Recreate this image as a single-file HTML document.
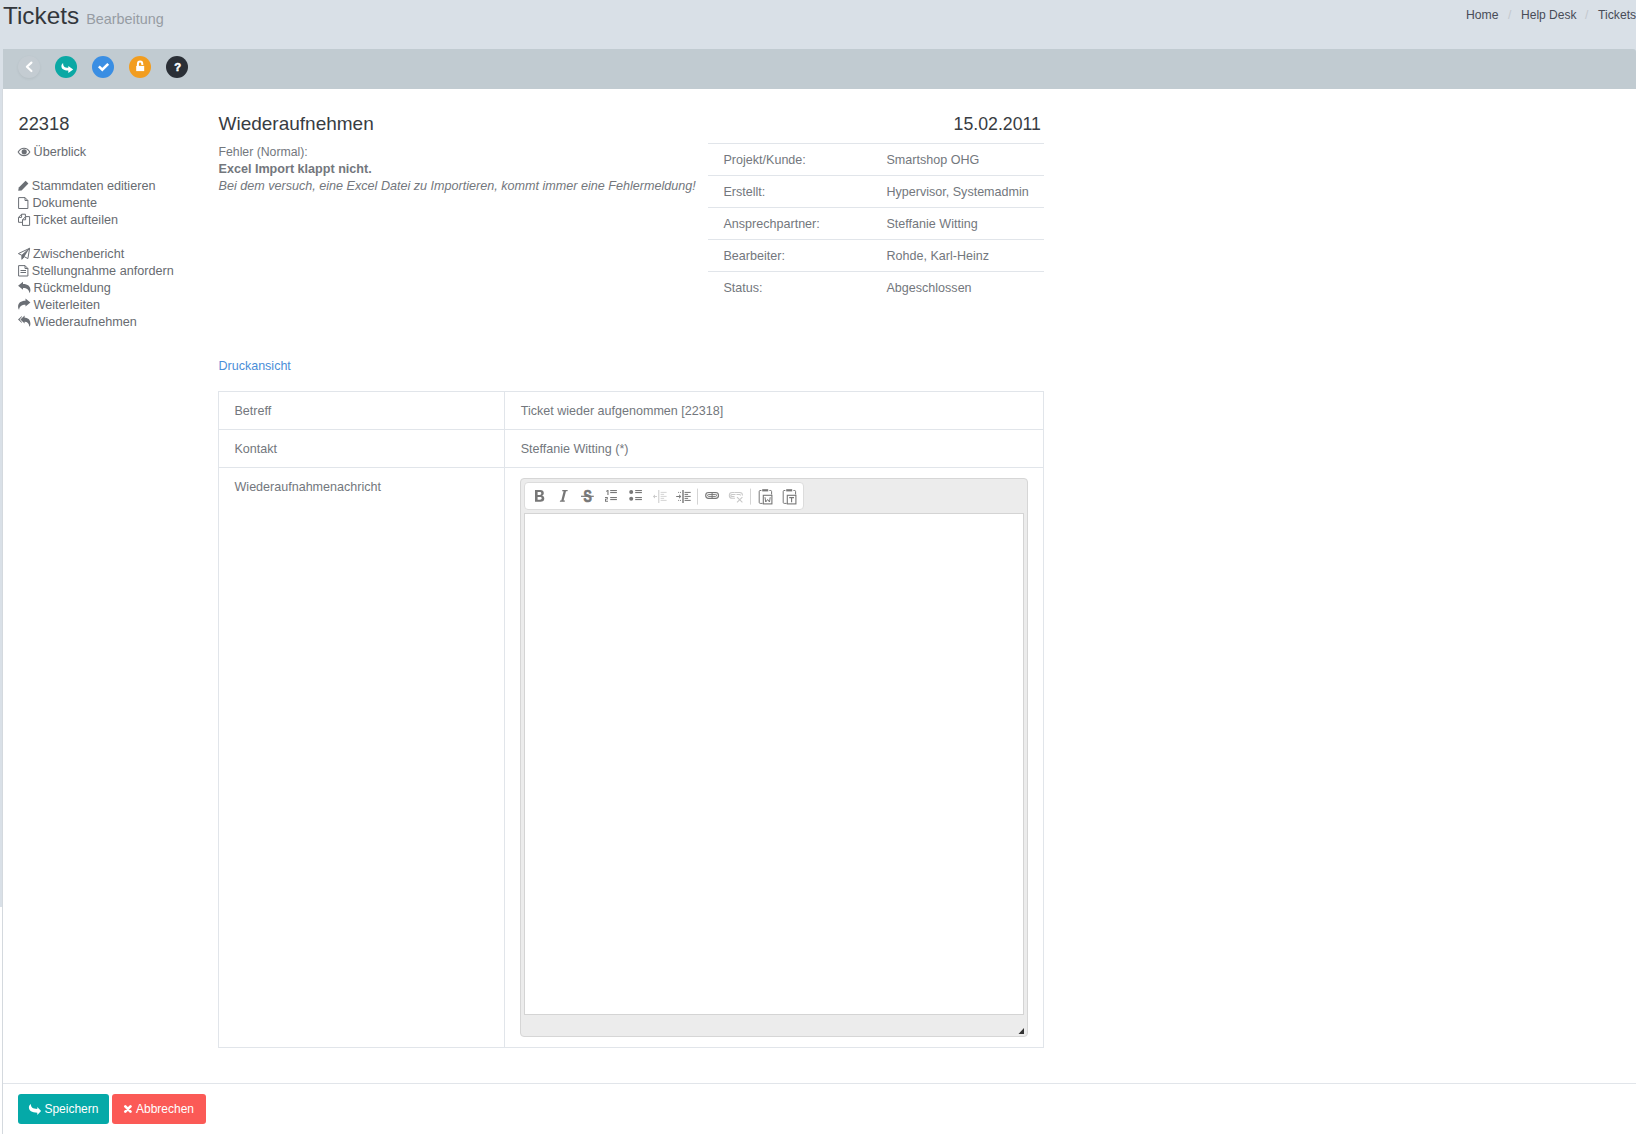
<!DOCTYPE html>
<html><head><meta charset="utf-8">
<style>
html,body{margin:0;padding:0;}
body{width:1636px;height:1134px;overflow:hidden;position:relative;background:#fff;font-family:"Liberation Sans",sans-serif;}
.a{position:absolute;}
.t{position:absolute;white-space:nowrap;line-height:1;}
#hdr{left:0;top:0;width:1636px;height:907px;background:#d9e0e7;}
#tb{left:3px;top:49px;width:1633px;height:40px;background:#c1cbd1;border-top-right-radius:3px;}
#panel{left:3px;top:89px;width:1633px;height:1045px;background:#fff;}
#lline{left:2px;top:89px;width:1px;height:1045px;background:#d4d9de;}
.circ{position:absolute;width:22px;height:22px;border-radius:50%;top:56px;}
.side{color:#676b71;font-size:12.65px;}
.ic{position:absolute;}
.lbl{color:#73777d;font-size:12.55px;}
.hr{position:absolute;height:1px;background:#e1e5ea;}
</style></head><body>
<div id="hdr" class="a"></div>
<div id="tb" class="a"></div>
<div id="panel" class="a"></div>
<div id="lline" class="a"></div>

<!-- header -->
<div class="t" style="left:3px;top:3.7px;font-size:24.3px;color:#33373c;">Tickets</div>
<div class="t" style="left:86.2px;top:11.8px;font-size:14.4px;color:#969ca3;">Bearbeitung</div>
<div class="t" style="left:1466px;top:8.5px;font-size:12.2px;color:#484c57;">Home</div>
<div class="t" style="left:1508px;top:8.5px;font-size:12.2px;color:#c3c8ce;">/</div>
<div class="t" style="left:1521px;top:8.5px;font-size:12.05px;color:#484c57;">Help Desk</div>
<div class="t" style="left:1585px;top:8.5px;font-size:12.2px;color:#c3c8ce;">/</div>
<div class="t" style="left:1598px;top:8.5px;font-size:12.2px;color:#484c57;">Tickets</div>

<!-- toolbar circles -->
<div class="circ" style="left:18px;background:#c4ccd2;box-shadow:0 1px 3px rgba(0,0,0,0.07);"></div>
<div class="circ" style="left:55px;background:#0ba8a4;"></div>
<div class="circ" style="left:92px;background:#3a8ee3;"></div>
<div class="circ" style="left:129px;background:#f29d1f;"></div>
<div class="circ" style="left:166px;background:#2a2f36;"></div>

<!-- sidebar -->
<div class="t" style="left:18.5px;top:114.8px;font-size:18.3px;color:#383c42;">22318</div>
<div class="t side" style="left:33.5px;top:146px;">Überblick</div>
<div class="t side" style="left:31.8px;top:180px;">Stammdaten editieren</div>
<div class="t side" style="left:32.4px;top:197px;">Dokumente</div>
<div class="t side" style="left:33.5px;top:214px;">Ticket aufteilen</div>
<div class="t side" style="left:32.9px;top:248px;">Zwischenbericht</div>
<div class="t side" style="left:31.8px;top:265px;">Stellungnahme anfordern</div>
<div class="t side" style="left:33.5px;top:282px;">Rückmeldung</div>
<div class="t side" style="left:33.5px;top:299px;">Weiterleiten</div>
<div class="t side" style="left:33.5px;top:316px;">Wiederaufnehmen</div>

<!-- main -->
<div class="t" style="left:218.5px;top:113.9px;font-size:19px;color:#383c42;">Wiederaufnehmen</div>
<div class="t lbl" style="left:218.5px;top:146.4px;font-size:12.28px;">Fehler (Normal):</div>
<div class="t lbl" style="left:218.5px;top:163px;font-size:12.6px;font-weight:bold;">Excel Import klappt nicht.</div>
<div class="t lbl" style="left:218.5px;top:180px;font-size:12.6px;font-style:italic;">Bei dem versuch, eine Excel Datei zu Importieren, kommt immer eine Fehlermeldung!</div>

<div class="t" style="left:953.6px;top:115.7px;font-size:17.73px;color:#383c42;">15.02.2011</div>

<div class="hr" style="left:708px;top:143px;width:336px;"></div>
<div class="hr" style="left:708px;top:175px;width:336px;"></div>
<div class="hr" style="left:708px;top:207px;width:336px;"></div>
<div class="hr" style="left:708px;top:239px;width:336px;"></div>
<div class="hr" style="left:708px;top:271px;width:336px;"></div>

<div class="t lbl" style="left:723.5px;top:154.3px;">Projekt/Kunde:</div>
<div class="t lbl" style="left:723.5px;top:186.3px;">Erstellt:</div>
<div class="t lbl" style="left:723.5px;top:218.3px;">Ansprechpartner:</div>
<div class="t lbl" style="left:723.5px;top:250.3px;">Bearbeiter:</div>
<div class="t lbl" style="left:723.5px;top:282.3px;">Status:</div>
<div class="t lbl" style="left:886.5px;top:154.3px;">Smartshop OHG</div>
<div class="t lbl" style="left:886.5px;top:186.3px;">Hypervisor, Systemadmin</div>
<div class="t lbl" style="left:886.5px;top:218.3px;">Steffanie Witting</div>
<div class="t lbl" style="left:886.5px;top:250.3px;">Rohde, Karl-Heinz</div>
<div class="t lbl" style="left:886.5px;top:282.3px;">Abgeschlossen</div>

<div class="t" style="left:218.5px;top:360.2px;font-size:12.53px;color:#4a8ed8;">Druckansicht</div>

<!-- form table -->
<div class="a" style="left:218px;top:391px;width:824px;height:655px;border:1px solid #e1e5ea;"></div>
<div class="hr" style="left:218px;top:429px;width:826px;"></div>
<div class="hr" style="left:218px;top:467px;width:826px;"></div>
<div class="a" style="left:504px;top:391px;width:1px;height:656px;background:#e1e5ea;"></div>
<div class="t lbl" style="left:234.5px;top:405.2px;">Betreff</div>
<div class="t lbl" style="left:234.5px;top:443.2px;">Kontakt</div>
<div class="t lbl" style="left:234.5px;top:481.2px;">Wiederaufnahmenachricht</div>
<div class="t lbl" style="left:520.7px;top:405.2px;">Ticket wieder aufgenommen [22318]</div>
<div class="t lbl" style="left:520.7px;top:443.2px;">Steffanie Witting (*)</div>

<!-- editor -->
<div class="a" style="left:520px;top:478px;width:506px;height:557px;background:#ececec;border:1px solid #d6d6d6;border-radius:4px;"></div>
<div class="a" style="left:524px;top:482px;width:278px;height:26px;background:#fff;border:1px solid #dcdcdc;border-radius:4px;"></div>
<div class="a" style="left:524px;top:513px;width:498px;height:500px;background:#fff;border:1px solid #d4d4d4;"></div>

<!-- footer -->
<div class="hr" style="left:3px;top:1083px;width:1633px;"></div>
<div class="a" style="left:18px;top:1094px;width:91px;height:30px;background:#05a9a8;border-radius:3px;"></div>
<div class="a" style="left:112px;top:1094px;width:94px;height:30px;background:#fb5a56;border-radius:3px;"></div>
<div class="t" style="left:44.4px;top:1102.6px;font-size:12px;color:#fff;">Speichern</div>
<div class="t" style="left:136px;top:1103px;font-size:12px;color:#fff;">Abbrechen</div>

<svg class="a" style="left:0;top:0" width="1636" height="1134" viewBox="0 0 1636 1134">
<!-- toolbar icons -->
<path d="M31.4,62.6 L26.9,66.8 L31.4,71" fill="none" stroke="#fff" stroke-width="2.2" stroke-linecap="round" stroke-linejoin="round"/>
<path d="M63.1,63 C63.1,66.4 64.5,67.8 68.3,67.8 L68.3,66 L73.2,69.5 L68.3,73 L68.3,70.5 C63.6,70.5 61.4,68.6 61.4,66.2 C61.4,64.9 62,63.8 63.1,63 Z" fill="#fff"/>
<path d="M98.9,66.3 L102.3,69.7 L108.2,63.8" fill="none" stroke="#fff" stroke-width="2.6" stroke-linecap="butt" stroke-linejoin="miter"/>
<rect x="136.2" y="65.9" width="8" height="5.2" fill="#fff"/>
<path d="M137.9,66.2 L137.9,64 A2.2,2.4 0 0 1 142.3,64 L142.3,64.9" fill="none" stroke="#fff" stroke-width="2"/>
<text x="177.7" y="71" font-family="Liberation Sans" font-weight="bold" font-size="11.3" fill="#fff" stroke="#fff" stroke-width="0.5" text-anchor="middle">?</text>

<!-- sidebar icons -->
<g fill="#6b6f75" stroke="#6b6f75">
 <path d="M18.2,152 C19.8,149.3 21.8,148.3 24,148.3 C26.2,148.3 28.2,149.3 29.8,152 C28.2,154.7 26.2,155.6 24,155.6 C21.8,155.6 19.8,154.7 18.2,152 Z" fill="none" stroke-width="1.1"/>
 <circle cx="24.2" cy="151.8" r="2.6" stroke="none"/>
 <!-- pencil -->
 <path d="M18.2,190.8 L18.8,187.6 L25.6,180.8 L28.4,183.6 L21.6,190.4 Z" stroke="none"/>
 <!-- file-o -->
 <path d="M18.6,197.6 L25,197.6 L27.9,200.5 L27.9,208.5 L18.6,208.5 Z M25,197.6 L25,200.5 L27.9,200.5" fill="none" stroke-width="1"/>
 <!-- files-o -->
 <path d="M18.5,217.4 L21.6,214.2 L25.4,214.2 L25.4,217 M22.5,222.3 L18.5,222.3 L18.5,217.4 M21.6,214.2 L21.6,217.4 L18.5,217.4" fill="none" stroke-width="1"/>
 <path d="M22.5,219.8 L25.6,216.6 L29.6,216.6 L29.6,225.4 L22.5,225.4 Z M25.6,216.6 L25.6,219.8 L22.5,219.8" fill="#fff" stroke-width="1"/>
 <!-- paper plane -->
 <path d="M18.4,253.6 L29.6,248.3 L27.9,258.6 L24.3,256.7 L21.9,259.3 L21.9,255.3 Z M21.9,255.3 L29.6,248.3" fill="none" stroke-width="1" stroke-linejoin="round"/>
 <path d="M21.9,255.3 L29.6,248.3 L24.3,256.7 L21.9,259.3 Z" stroke="none"/>
 <!-- file-text-o -->
 <path d="M18.6,265.6 L25,265.6 L27.9,268.5 L27.9,276 L18.6,276 Z M25,265.6 L25,268.5 L27.9,268.5" fill="none" stroke-width="1"/>
 <path d="M20.5,270.5 L26,270.5 M20.5,272.5 L26,272.5" fill="none" stroke-width="1.1"/>
 <!-- reply -->
 <path d="M18.1,285.7 L23,281.8 L23,284 C27.8,284 30.4,286.3 30.4,290 C30.4,291.4 30,292.2 29.4,293 C29,289.6 27,288 23,288 L23,289.8 Z" stroke="none"/>
 <!-- share -->
 <path d="M30.4,302.5 L25.5,298.6 L25.5,300.8 C20.7,300.8 18.1,303.1 18.1,306.8 C18.1,308.2 18.5,309 19.1,309.8 C19.5,306.4 21.5,304.8 25.5,304.8 L25.5,306.6 Z" stroke="none"/>
 <!-- reply-all -->
 <path d="M20.4,319.5 L24.6,315.6 L24.6,317.8 C28.4,317.8 30.4,320.1 30.4,323.8 C30.4,325.2 30,326 29.4,326.8 C29,323.4 27.4,321.8 24.6,321.8 L24.6,323.6 Z" stroke="none"/>
 <path d="M21.8,315.9 L18,319.4 L21.8,322.9 L21.8,322 L19.6,319.4 L21.8,316.9 Z" stroke="none"/>
</g>

<!-- editor toolbar icons -->
<g fill="#777" stroke="none">
 <path d="M535,490 L540.2,490 C542.6,490 543.8,491.2 543.8,493 C543.8,494.3 543.1,495.2 542,495.6 C543.4,496 544.3,497.1 544.3,498.5 C544.3,500.6 542.8,501.8 540.4,501.8 L535,501.8 Z M537.6,492.1 L537.6,494.9 L539.7,494.9 C540.8,494.9 541.3,494.4 541.3,493.5 C541.3,492.6 540.8,492.1 539.7,492.1 Z M537.6,496.9 L537.6,499.7 L540,499.7 C541.1,499.7 541.7,499.1 541.7,498.3 C541.7,497.4 541.1,496.9 540,496.9 Z" fill-rule="evenodd"/>
 <path d="M562.4,490 L567.8,490 L567.4,491.3 L566,491.3 L563.6,500.5 L565,500.5 L564.7,501.8 L559.8,501.8 L560.1,500.5 L561.3,500.5 L563.6,491.3 L562.1,491.3 Z"/>
 <text x="587.6" y="501.6" font-family="Liberation Sans" font-weight="bold" font-size="15.6" text-anchor="middle" stroke="#777" stroke-width="0.7" transform="translate(587.6 0) scale(0.8 1) translate(-587.6 0)">S</text>
 <rect x="581" y="495.7" width="12.8" height="1.2"/>
 <!-- OL -->
 <path d="M606.2,490.8 L607.6,490 L608.5,490 L608.5,495 L607.4,495 L607.4,491.3 L606.2,491.9 Z"/>
 <path d="M605,497 L607.8,497 L607.8,499.6 L606,499.6 L606,500.8 L608,500.8 L608,501.8 L605,501.8 L605,498.8 L606.8,498.8 L606.8,497.9 L605,497.9 Z"/>
 <rect x="610.2" y="490" width="6.7" height="1.1"/><rect x="610.2" y="492" width="6.7" height="1.1"/>
 <rect x="610.2" y="497" width="6.7" height="1.1"/><rect x="610.2" y="499" width="6.7" height="1.1"/>
 <!-- UL -->
 <circle cx="631.2" cy="492" r="2"/><circle cx="631.2" cy="498.8" r="2"/>
 <rect x="635.2" y="490" width="6.7" height="1.1"/><rect x="635.2" y="492" width="6.7" height="1.1"/>
 <rect x="635.2" y="497" width="6.7" height="1.1"/><rect x="635.2" y="499" width="6.7" height="1.1"/>
 <!-- indent -->
 <rect x="682.3" y="490" width="1.4" height="13"/>
 <rect x="684.6" y="491.9" width="6.1" height="1"/><rect x="684.6" y="493.9" width="3.5" height="1"/>
 <rect x="684.6" y="495.9" width="6.1" height="1"/><rect x="684.6" y="497.9" width="3.5" height="1"/>
 <rect x="684.6" y="499.9" width="6.1" height="1"/>
 <rect x="676.2" y="496" width="3.5" height="1"/><path d="M679.2,494.3 L681.2,496.5 L679.2,498.7 Z"/>
 <rect x="678.2" y="491.9" width="0.9" height="1"/><rect x="680" y="491.9" width="0.9" height="1"/>
 <rect x="678.2" y="499.9" width="0.9" height="1"/><rect x="680" y="499.9" width="0.9" height="1"/>
 <!-- link -->
 <rect x="705.7" y="492.5" width="12.8" height="5.8" rx="2.9" fill="none" stroke="#777" stroke-width="1.15"/>
 <rect x="707.6" y="494.4" width="9" height="2" rx="1" fill="none" stroke="#777" stroke-width="1"/>
 <rect x="711.6" y="492.5" width="1" height="6"/>
 <!-- paste word -->
 <path d="M761.4,490.5 L760,490.5 C759.4,490.5 759.2,491 759.2,491.5 L759.2,502.4 C759.2,503 759.6,503.4 760.2,503.4 L762.6,503.4" fill="none" stroke="#777" stroke-width="1"/>
 <path d="M769.4,490.5 L770.8,490.5 C771.4,490.5 771.6,491 771.6,491.5 L771.6,494.5" fill="none" stroke="#777" stroke-width="1"/>
 <rect x="762.2" y="489.2" width="6" height="2.2"/>
 <rect x="763.3" y="495.3" width="8.6" height="8.6" fill="none" stroke="#777" stroke-width="1.1"/>
 <path d="M765,497.2 L765.7,502 L767.6,499.5 L769.5,502 L770.2,497.2" fill="none" stroke="#777" stroke-width="1"/>
 <!-- paste text -->
 <path d="M785.4,490.5 L784,490.5 C783.4,490.5 783.2,491 783.2,491.5 L783.2,502.4 C783.2,503 783.6,503.4 784.2,503.4 L786.6,503.4" fill="none" stroke="#777" stroke-width="1"/>
 <path d="M793.4,490.5 L794.8,490.5 C795.4,490.5 795.6,491 795.6,491.5 L795.6,494.5" fill="none" stroke="#777" stroke-width="1"/>
 <rect x="786.2" y="489.2" width="6" height="2.2"/>
 <rect x="787.3" y="495.3" width="8.6" height="8.6" fill="none" stroke="#777" stroke-width="1.1"/>
 <path d="M789.2,497.6 L794,497.6 M791.6,497.6 L791.6,502.2" fill="none" stroke="#777" stroke-width="1.1"/>
</g>
<g fill="#c9c9c9" stroke="none">
 <!-- outdent (disabled) -->
 <rect x="658.3" y="490" width="1" height="13"/>
 <rect x="660.6" y="491.9" width="6" height="0.8"/><rect x="660.6" y="493.9" width="3.5" height="0.8"/>
 <rect x="660.6" y="495.9" width="6" height="0.8"/><rect x="660.6" y="497.9" width="3.5" height="0.8"/>
 <rect x="660.6" y="499.9" width="6" height="0.8"/>
 <rect x="653.5" y="496" width="3.5" height="0.9"/><path d="M655,494.5 L653,496.5 L655,498.5 Z"/>
 <!-- unlink -->
 <path d="M734.5,492.5 L732.2,492.5 A2.9,2.9 0 0 0 732.2,498.3 L735,498.3 M735.5,494.4 L731.8,494.4 A1,1 0 0 0 731.8,496.4 L734.5,496.4" fill="none" stroke="#c9c9c9" stroke-width="1.05"/>
 <path d="M734.5,492.5 L739.6,492.5 A2.9,2.9 0 0 1 742.5,495.4 M736.5,494.4 L739.6,494.4 A1,1 0 0 1 740.6,495.4" fill="none" stroke="#c9c9c9" stroke-width="1.05"/>
 <path d="M737,497.2 L742.4,502.4 M742.4,497.2 L737,502.4" fill="none" stroke="#c9c9c9" stroke-width="1.1"/>
</g>
<rect x="697" y="488.6" width="1" height="16" fill="#d4d4d4"/>
<rect x="750" y="488.6" width="1" height="16" fill="#d4d4d4"/>
<!-- resize grip -->
<path d="M1024,1028 L1024,1034 L1018.5,1034 Z" fill="#333"/>

<!-- button icons -->
<path d="M30.9,1104 C30.9,1107.4 32.6,1108.9 37.3,1108.9 L37.3,1107 L41.1,1110.9 L37.3,1114.9 L37.3,1112.8 C31.6,1112.8 28.9,1110.6 28.9,1107.6 C28.9,1106 29.6,1104.8 30.9,1104 Z" fill="#fff"/>
<path d="M125.3,1106.4 L130.5,1111.6 M130.5,1106.4 L125.3,1111.6" fill="none" stroke="#fff" stroke-width="2.7" stroke-linecap="round"/>
</svg>
</body></html>
